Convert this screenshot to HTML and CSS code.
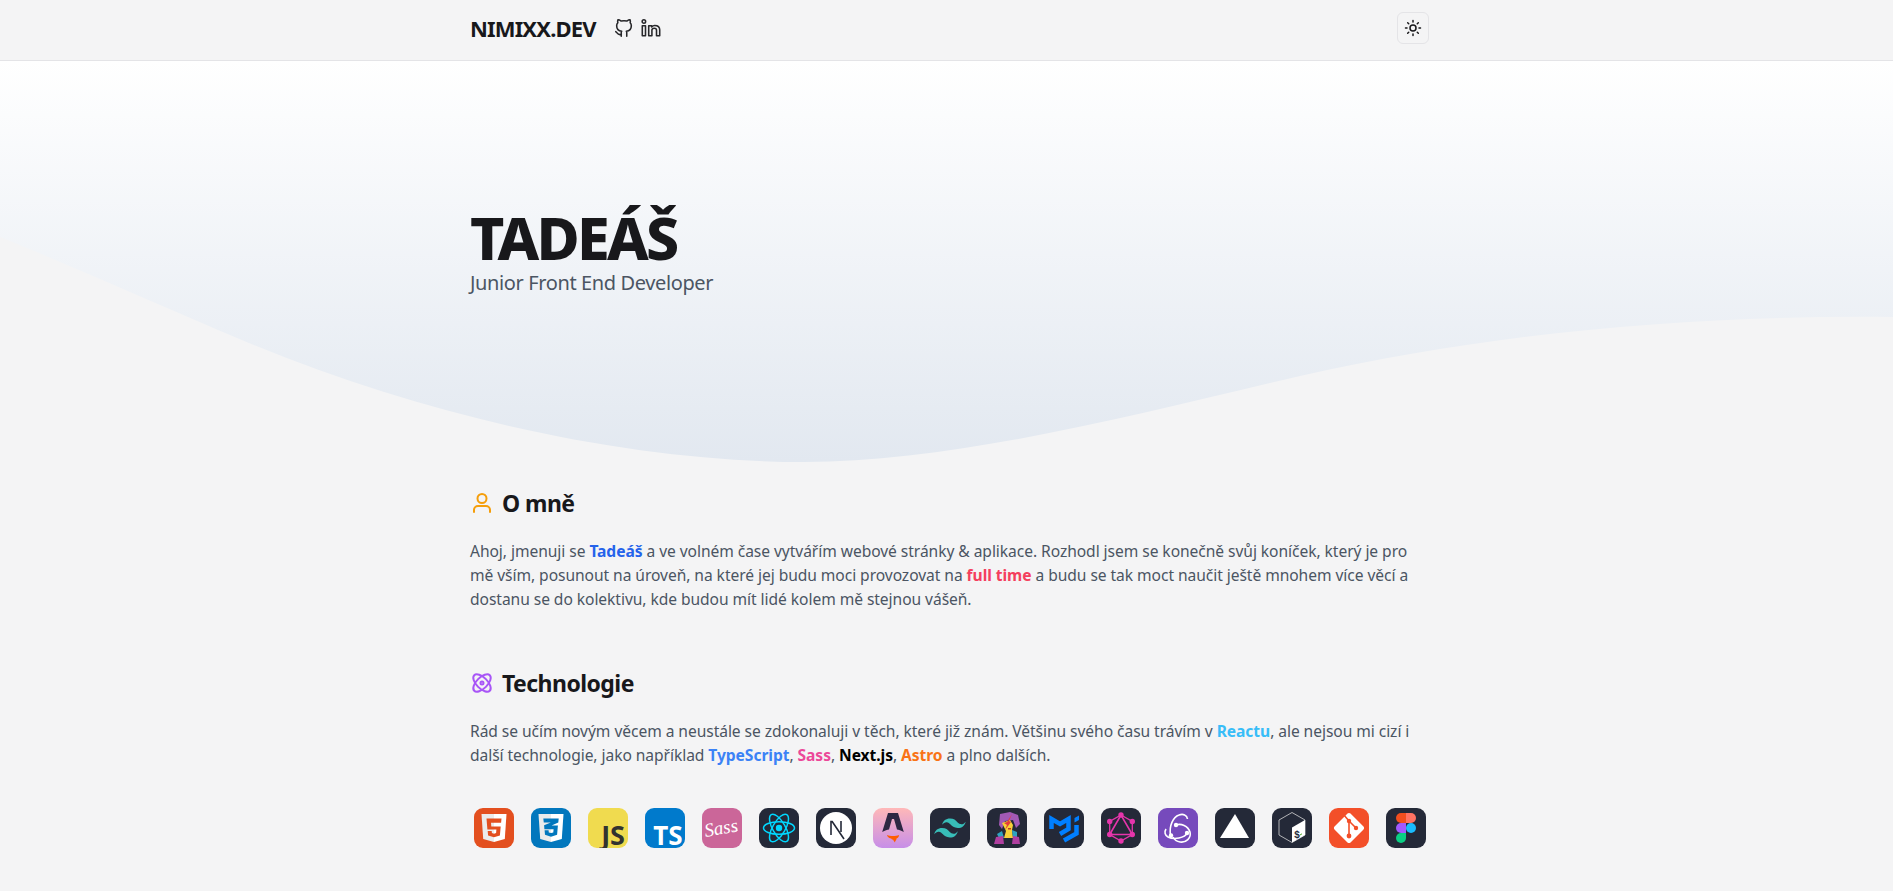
FILE: index.html

```html
<!DOCTYPE html>
<html lang="en">
<head>
    <meta charset="UTF-8">
    <title>NIMIXX.DEV</title>
    <link rel="stylesheet" href="styles.css">
</head>
<body>
    <header class="topbar">
        <div class="topbar-inner">
            <div class="brand">
                <a class="logo">NIMIXX.DEV</a>
                <svg class="social" viewBox="0 0 24 24"><path d="M9 19c-4.300 1.400-4.300-2.500-6-3m12 5v-3.500c0-1 .1-1.400-.5-2 2.800-.3 5.500-1.400 5.500-6a4.600 4.600 0 0 0-1.300-3.200 4.200 4.200 0 0 0-.1-3.200s-1.100-.3-3.500 1.300a12.300 12.300 0 0 0-6.200 0c-2.400-1.600-3.500-1.300-3.500-1.300a4.200 4.200 0 0 0-.1 3.200A4.600 4.600 0 0 0 4 9.500c0 4.600 2.700 5.700 5.500 6-.6.6-.6 1.200-.5 2V21"/></svg>
                <svg class="social" viewBox="0 0 24 24"><path d="M2.500 9.500h3.500v11h-3.500z"/><circle cx="4.250" cy="5" r="1.900"/><path d="M9.500 20.500v-11h3.200v1.300c.9-1 2-1.600 3.300-1.600 3.200 0 5.500 1.900 5.500 4.800v6.500h-3.500v-6.200c0-1.300-1-2.100-2.400-2.100s-2.600.8-2.600 2.100v6.200z"/></svg>
            </div>
            <button class="theme-btn">
                <svg viewBox="0 0 24 24"><circle cx="12" cy="12" r="4"/><path d="M12 2v2M12 20v2M4.900 4.900l1.400 1.400M17.700 17.700l1.400 1.400M2 12h2M20 12h2M6.300 17.700l-1.400 1.400M19.100 4.900l-1.400 1.400"/></svg>
            </button>
        </div>
    </header>

    <div class="wave">
        <svg viewBox="0 0 1893 402" preserveAspectRatio="none">
            <defs>
                <linearGradient id="waveFill" x1="0" y1="0" x2="0" y2="1">
                    <stop offset="0" stop-color="#ffffff"/>
                    <stop offset="1" stop-color="#e2e8f0"/>
                </linearGradient>
            </defs>
            <path fill="url(#waveFill)" d="M0 0H1893V256C1700 254 1500 270 1300 315 1150 350 960 401 804 401 640 401 430 360 230 274 150 240 60 200 0 176Z"/>
        </svg>
    </div>

    <main class="page">
        <section class="hero">
            <h1>TADEÁŠ</h1>
            <p>Junior Front End Developer</p>
        </section>

        <section class="block">
            <h2>
                <svg class="head-icon user" viewBox="0 0 24 24"><circle cx="12" cy="7.500" r="4.500"/><path d="M4 21v-2a4 4 0 0 1 4-4h8a4 4 0 0 1 4 4v2"/></svg>
                O mně
            </h2>
            <p>Ahoj, jmenuji se <b class="blue">Tadeáš</b> a ve volném čase vytvářím webové stránky &amp; aplikace. Rozhodl jsem se konečně svůj koníček, který je pro mě vším, posunout na úroveň, na které jej budu moci provozovat na <b class="rose">full time</b> a budu se tak moct naučit ještě mnohem více věcí a dostanu se do kolektivu, kde budou mít lidé kolem mě stejnou vášeň.</p>
        </section>

        <section class="block">
            <h2>
                <svg class="head-icon atom" viewBox="0 0 24 24"><circle cx="12" cy="12" r="1.500"/><ellipse cx="12" cy="12" rx="11" ry="5.500" transform="rotate(45 12 12)"/><ellipse cx="12" cy="12" rx="11" ry="5.500" transform="rotate(-45 12 12)"/></svg>
                Technologie
            </h2>
            <p>Rád se učím novým věcem a neustále se zdokonaluji v těch, které již znám. Většinu svého času trávím v <b class="sky">Reactu</b>, ale nejsou mi cizí i další technologie, jako například <b class="ts">TypeScript</b>, <b class="pink">Sass</b>, <b class="black">Next.js</b>, <b class="orange">Astro</b> a plno dalších.</p>

            <div class="tech-row">
                <svg viewBox="0 0 40 40"><rect width="40" height="40" rx="9" fill="#e34f1f"/><path fill="#ebebeb" d="M7.500 6h12.500v28l-10.800-3z"/><path fill="#fff" d="M20 6h12.500l-1.700 25-10.800 3z"/><path fill="#e34f1f" d="M12.500 10.500h15l-.4 4.200H17l.3 3.800h9.400l-.8 9-5.900 1.700-5.900-1.700-.4-4.600h4l.2 2.200 2.100.6 2.100-.6.3-3.500h-9z"/></svg>
                <svg viewBox="0 0 40 40"><rect width="40" height="40" rx="9" fill="#0277bd"/><path fill="#ebebeb" d="M7.500 6h12.500v28l-10.800-3z"/><path fill="#fff" d="M20 6h12.500l-1.700 25-10.800 3z"/><path fill="#0277bd" d="M12.300 10.500h15.400l-.4 4.100-6.700 3h6.300l-.8 9.200-6.100 1.900-6-1.900-.4-4.500h4l.2 2.100 2.200.7 2.300-.7.300-3.100h-9.200l-.3-4 6.700-2.700h-7z"/></svg>
                <svg viewBox="0 0 40 40"><rect width="40" height="40" rx="9" fill="#f0db4f"/><text class="icon-word" x="37" y="37" text-anchor="end" font-size="27" fill="#323330">JS</text></svg>
                <svg viewBox="0 0 40 40"><rect width="40" height="40" rx="9" fill="#007acc"/><text class="icon-word" x="37.500" y="37" text-anchor="end" font-size="26" fill="#fff">TS</text></svg>
                <svg viewBox="0 0 40 40"><rect width="40" height="40" rx="9" fill="#cb6699"/><text x="19" y="26" text-anchor="middle" font-size="19" font-style="italic" font-family="'Liberation Serif', serif" fill="#fff" transform="rotate(-10 20 20)">Sass</text><path d="M31 23c1.500.3 3 0 4.500-.5" fill="none" stroke="#fff" stroke-width=".9"/></svg>
                <svg viewBox="0 0 40 40"><rect width="40" height="40" rx="9" fill="#242938"/><g fill="none" stroke="#00d8ff" stroke-width="1.500"><ellipse cx="20" cy="20" rx="15.500" ry="6.300"/><ellipse cx="20" cy="20" rx="15.500" ry="6.300" transform="rotate(60 20 20)"/><ellipse cx="20" cy="20" rx="15.500" ry="6.300" transform="rotate(120 20 20)"/></g><circle cx="20" cy="20" r="3.200" fill="#00d8ff"/></svg>
                <svg viewBox="0 0 40 40"><rect width="40" height="40" rx="9" fill="#242938"/><circle cx="20" cy="20" r="16" fill="#fff"/><path d="M15 27V13.500h1.200L28 31" fill="none" stroke="#242938" stroke-width="1.600"/><path d="M25 13v11" stroke="#242938" stroke-width="1.600"/></svg>
                <svg viewBox="0 0 40 40"><defs><linearGradient id="astroBg" x1="0" y1="0" x2="0" y2="1"><stop offset="0" stop-color="#ffb8b8"/><stop offset="1" stop-color="#c78ee8"/></linearGradient></defs><rect width="40" height="40" rx="9" fill="url(#astroBg)"/><path fill="#2d2742" d="M15 5h10l5.800 19c-3-1.600-5-2.200-6.800-2.400l-3-10.600h-2l-3 10.600c-1.800.2-3.800.8-6.800 2.400z"/><path fill="#ff5d01" d="M14 27c3 1.300 9 1.300 12 0 0 2-1 3-2.500 3.500 0 2-1.500 2-1.500 4-1-1-1.500-2-2-3-1 .5-1.200-.5-2-1-2.500-.6-4-2-4-3.500z"/></svg>
                <svg viewBox="0 0 40 40"><rect width="40" height="40" rx="9" fill="#242938"/><path fill="#38bdb8" d="M20 10.500c-4.200 0-6.800 2.100-7.900 6.300 1.600-2.100 3.400-2.900 5.500-2.400 1.200.3 2 1.200 3 2.200 1.500 1.600 3.300 3.400 7.200 3.400 4.200 0 6.800-2.100 7.900-6.300-1.600 2.100-3.400 2.900-5.500 2.400-1.200-.3-2-1.200-3-2.200-1.500-1.600-3.300-3.400-7.200-3.400zM12.100 20c-4.200 0-6.800 2.100-7.900 6.300 1.600-2.100 3.400-2.900 5.500-2.400 1.200.3 2 1.200 3 2.200 1.500 1.600 3.300 3.400 7.200 3.400 4.200 0 6.800-2.100 7.900-6.300-1.600 2.100-3.400 2.900-5.500 2.400-1.200-.3-2-1.200-3-2.200-1.500-1.600-3.300-3.400-7.200-3.400z"/></svg>
                <svg viewBox="0 0 40 40"><rect width="40" height="40" rx="9" fill="#242938"/><path fill="#a259b5" d="M13 6l10-2 8 3 2 9-4 4-3-8-8 1-3 8-3-4z"/><path fill="#f7d038" d="M15 15l8-3 3 5-1 5 1 8h-9l2-7z"/><path fill="#e23b3b" d="M25 6l-5 8-3 1 3 2-2 5 6-8-2-1z"/><path fill="#2fa3c0" d="M10 26l5-3 2 7h-5zM30 24l-5-2 1 8h4z"/><path fill="#b03fa0" d="M7 36l2-7 7-1 1 8zM33 36l-1-7-6-1-1 8z"/><rect x="21" y="20" width="3" height="1.500" fill="#c0392b"/></svg>
                <svg viewBox="0 0 40 40"><rect width="40" height="40" rx="9" fill="#242938"/><g fill="none" stroke="#007fff" stroke-width="4.500"><path d="M7.500 21V11L16 16l8.500-5v10L16 26"/><path d="M32.500 17v8.500L20 32.500"/></g><path fill="#007fff" d="M30.500 10l4.500-2.500V12l-4.500 2.500z"/></svg>
                <svg viewBox="0 0 40 40"><rect width="40" height="40" rx="9" fill="#242938"/><g fill="none" stroke="#e535ab" stroke-width="1.300"><path d="M20 7l11.300 6.500v13L20 33 8.700 26.500v-13z"/><path d="M20 7L8.700 26.500h22.600z" stroke-width="1.600"/></g><g fill="#e535ab"><circle cx="20" cy="7" r="2.700"/><circle cx="31.300" cy="13.500" r="2.700"/><circle cx="31.300" cy="26.500" r="2.700"/><circle cx="20" cy="33" r="2.700"/><circle cx="8.700" cy="26.500" r="2.700"/><circle cx="8.700" cy="13.500" r="2.700"/></g></svg>
                <svg viewBox="0 0 40 40"><rect width="40" height="40" rx="9" fill="#764abc"/><g fill="none" stroke="#fff" stroke-width="1.600"><path d="M12.500 27C11 18 15 9 21 7c4-1.500 8 0 8.500 4"/><path d="M18 17c5-2 12 1 14 7 1.500 6-4 11-10 10-3-.5-5.500-2-7-5"/><path d="M29 25c-2 5-13 7-19 4-3-1.500-4-5-2-8"/></g><circle cx="18" cy="17" r="2.200" fill="#fff"/><circle cx="29" cy="25" r="2.200" fill="#fff"/><circle cx="13" cy="27.500" r="2.200" fill="#fff"/></svg>
                <svg viewBox="0 0 40 40"><rect width="40" height="40" rx="9" fill="#242938"/><path fill="#fff" d="M20 6l14 24H5z"/></svg>
                <svg viewBox="0 0 40 40"><rect width="40" height="40" rx="9" fill="#242938"/><path fill="none" stroke="#d5d5d5" stroke-width=".8" d="M20 4.500l13 7.500v15l-13 7.500L7 27V12z"/><path fill="#fff" d="M33 12v15l-13 7.500v-15z"/><text x="22" y="30" font-size="10" font-weight="700" font-family="'Liberation Mono', monospace" fill="#242938">$</text><path d="M28 27l2-1.200" stroke="#4eaa25" stroke-width="1"/></svg>
                <svg viewBox="0 0 40 40"><rect width="40" height="40" rx="9" fill="#f34f29"/><path fill="#fff" d="M18.500 5.500c.8-.8 2.200-.8 3 0l13 13c.8.800.8 2.200 0 3l-13 13c-.8.800-2.200.8-3 0l-13-13c-.8-.8-.8-2.200 0-3z"/><g fill="none" stroke="#f34f29" stroke-width="1.600"><path d="M15 7l5 6v14"/><path d="M20 13l7 7"/></g><circle cx="20" cy="13" r="2.200" fill="#f34f29"/><circle cx="27" cy="20" r="2.200" fill="#f34f29"/><circle cx="20" cy="28" r="2.400" fill="#f34f29"/></svg>
                <svg viewBox="0 0 40 40"><rect width="40" height="40" rx="9" fill="#242938"/><path fill="#f24e1e" d="M20 5h-5a5 5 0 0 0 0 10h5z"/><path fill="#ff7262" d="M20 5h5a5 5 0 0 1 0 10h-5z"/><path fill="#a259ff" d="M20 15h-5a5 5 0 0 0 0 10h5z"/><circle cx="25" cy="20" r="5" fill="#1abcfe"/><path fill="#0acf83" d="M15 25h5v5a5 5 0 1 1-5-5z"/></svg>
            </div>
        </section>
    </main>
</body>
</html>
```

FILE: styles.css

```css
* {
    margin: 0;
    padding: 0;
    box-sizing: border-box;
}

body {
    background-color: #f4f4f5;
    color: #18181b;
    font-family: 'Noto Sans', 'Open Sans', sans-serif;
    min-height: 100vh;
    position: relative;
}

.topbar {
    height: 61px;
    padding-bottom: 5px;
    background-color: #f4f4f5;
    border-bottom: 1px solid #e4e4e7;
    position: relative;
    z-index: 2;
}

.topbar-inner {
    width: 959px;
    height: 100%;
    margin-left: 470px;
    display: flex;
    align-items: center;
    justify-content: space-between;
}

.brand {
    display: flex;
    align-items: center;
    gap: 5px;
}

.logo {
    font-size: 22px;
    font-weight: 700;
    letter-spacing: -0.85px;
    margin-right: 12px;
}

.social {
    width: 22px;
    height: 22px;
    fill: none;
    stroke: #27272a;
    stroke-width: 1.7;
    stroke-linecap: round;
    stroke-linejoin: round;
}

.theme-btn {
    width: 32px;
    height: 32px;
    border: 1px solid #e4e4e7;
    border-radius: 6px;
    background: transparent;
    display: flex;
    align-items: center;
    justify-content: center;
}

.theme-btn svg {
    width: 18px;
    height: 18px;
    fill: none;
    stroke: #18181b;
    stroke-width: 2;
    stroke-linecap: round;
}

.wave {
    position: absolute;
    top: 61px;
    left: 0;
    width: 100%;
    height: 402px;
}

.wave svg {
    display: block;
    width: 100%;
    height: 100%;
}

.page {
    width: 960px;
    margin-left: 470px;
    position: relative;
    z-index: 1;
}

.hero {
    padding-top: 143px;
    height: 426px;
}

.hero h1 {
    font-size: 59px;
    font-weight: 800;
    line-height: 66px;
    letter-spacing: -2.75px;
}

.hero p {
    font-size: 20px;
    line-height: 28px;
    letter-spacing: -0.38px;
    color: #4b5563;
    margin-top: -1px;
}

.block {
    padding-bottom: 56px;
}

.block h2 {
    display: flex;
    align-items: center;
    gap: 8px;
    font-size: 23px;
    font-weight: 700;
    line-height: 32px;
    letter-spacing: -0.55px;
    margin-bottom: 20px;
}

.head-icon {
    width: 24px;
    height: 24px;
    fill: none;
    stroke-width: 2;
    stroke-linecap: round;
    stroke-linejoin: round;
}

.head-icon.user {
    stroke: #f59e0b;
}

.head-icon.atom {
    stroke: #a855f7;
}

.block p {
    font-size: 15.6px;
    line-height: 24px;
    letter-spacing: -0.06px;
    color: #4b5563;
}

.block b {
    font-weight: 700;
}

.blue { color: #2563eb; }
.rose { color: #f43f5e; }
.sky { color: #38bdf8; }
.ts { color: #3b82f6; }
.pink { color: #ec4899; }
.black { color: #000000; }
.orange { color: #f97316; }

.tech-row {
    display: flex;
    gap: 17px;
    padding: 0 4px;
    margin-top: 41px;
}

.tech-row svg {
    width: 40px;
    height: 40px;
    flex-shrink: 0;
}

.icon-word {
    font-family: 'Noto Sans', sans-serif;
    font-weight: 700;
}
```
